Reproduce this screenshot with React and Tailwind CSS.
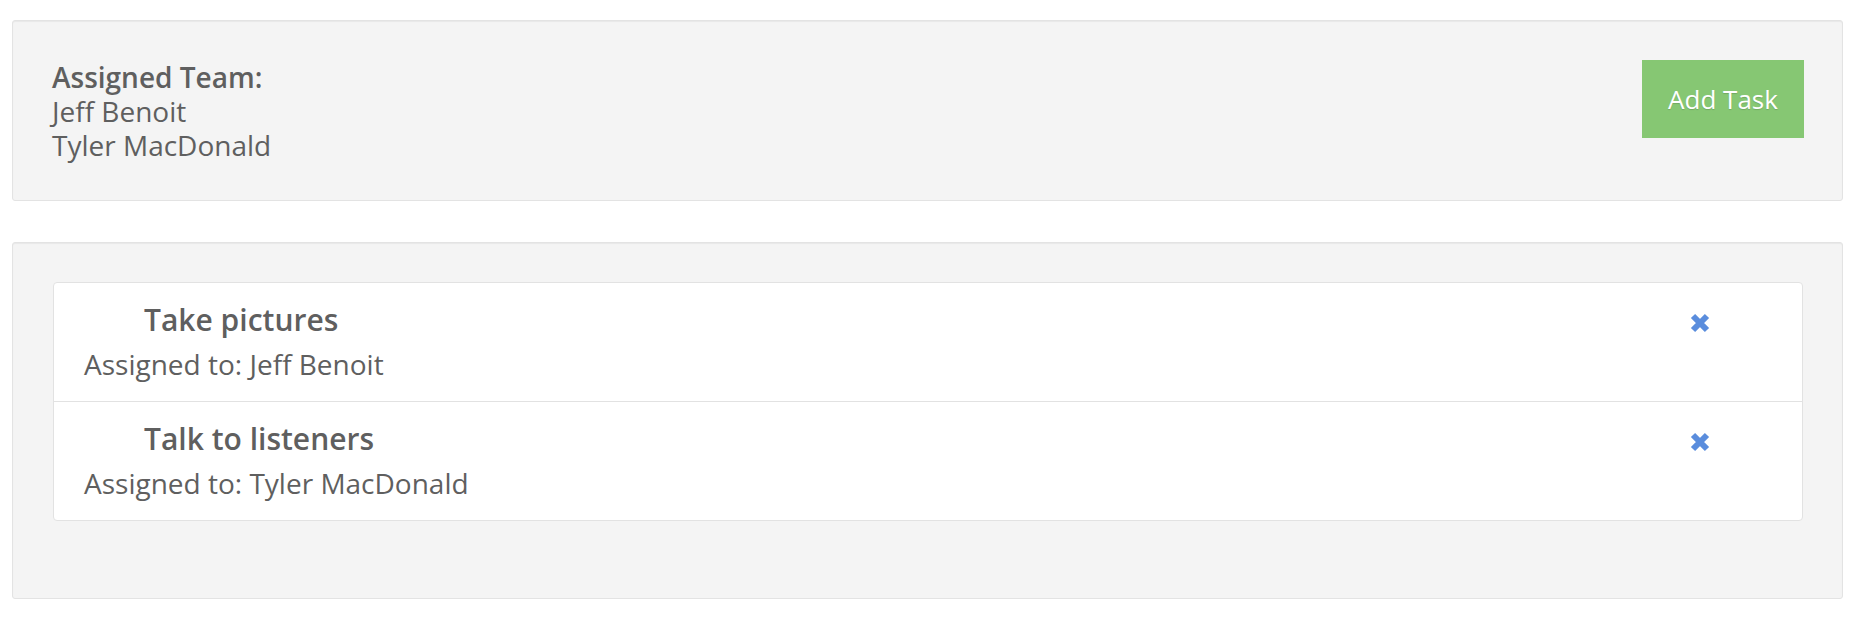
export default function App() {
  const tasks = [
    { title: "Take pictures", who: "Jeff Benoit" },
    { title: "Talk to listeners", who: "Tyler MacDonald" },
  ];
  const XIcon = () => (
    <svg width="20" height="20" viewBox="0 0 20 20" className="block">
      <path d="M3 3 L17 17 M17 3 L3 17" stroke="#5a8ddd" strokeWidth="6" strokeLinecap="butt" fill="none" />
    </svg>
  );
  return (
    <div className="bg-white min-h-[624px] pt-[20px] pl-[12px] pr-[19px] font-['Open_Sans',sans-serif] text-[#5f5f5f]">
      <div className="flex justify-between items-start border border-[#e3e3e3] bg-[#f4f4f4] rounded-[3px] shadow-[inset_0_1px_1px_rgba(0,0,0,0.05)] pl-[39px] pr-[38px] pt-[39px] pb-[38px]">
        <div className="text-[28px] leading-[34px]">
          <div className="font-semibold">Assigned Team:</div>
          <div>Jeff Benoit</div>
          <div>Tyler MacDonald</div>
        </div>
        <button className="w-[162px] h-[78px] bg-[#86c773] text-white text-[26px] [text-shadow:0_1px_1px_rgba(0,0,0,0.15)]">
          Add Task
        </button>
      </div>
      <div className="mt-[41px] border border-[#e3e3e3] bg-[#f4f4f4] rounded-[3px] shadow-[inset_0_1px_1px_rgba(0,0,0,0.05)] pl-[40px] pr-[39px] pt-[39px] pb-[77px]">
        <div className="bg-white border border-[#e2e2e2] rounded-[4px]">
          {tasks.map((t, i) => (
            <div
              key={t.title}
              className={`flex justify-between items-start pl-[30px] pr-[92px] pt-[18px] pb-[20px] ${i > 0 ? "border-t border-[#e2e2e2]" : ""}`}
            >
              <div>
                <div className="ml-[60px] mb-[8px] text-[30px] leading-[38px] font-semibold">{t.title}</div>
                <div className="text-[28px] leading-[34px]">Assigned to: {t.who}</div>
              </div>
              <div className="mt-[12px]">
                <XIcon />
              </div>
            </div>
          ))}
        </div>
      </div>
    </div>
  );
}
